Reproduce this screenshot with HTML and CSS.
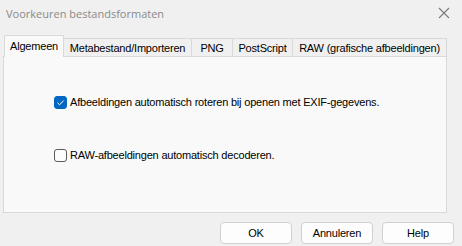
FILE: index.html
```html
<!DOCTYPE html>
<html>
<head>
<meta charset="utf-8">
<link rel="stylesheet" href="styles.css">
</head>
<body>
<div class="dialog">
  <div class="titlebar">
    <span class="title">Voorkeuren bestandsformaten</span>
    <svg class="close" width="12" height="12" viewBox="0 0 12 12"><path d="M1 1L11 11M11 1L1 11" stroke="#7a7a7a" stroke-width="1.1" fill="none"/></svg>
  </div>
  <div class="tabs">
    <div class="tab active t1">Algemeen</div>
    <div class="tab t2">Metabestand/Importeren</div>
    <div class="tab t3">PNG</div>
    <div class="tab t4">PostScript</div>
    <div class="tab t5">RAW (grafische afbeeldingen)</div>
  </div>
  <div class="panel">
    <label class="row first">
      <span class="box checked"><svg width="13" height="13" viewBox="0 0 13 13"><path d="M3.5 6.8L5.6 8.8L9.6 4.6" stroke="#fff" stroke-width="1" fill="none"/></svg></span>
      <span class="label">Afbeeldingen automatisch roteren bij openen met EXIF-gegevens.</span>
    </label>
    <label class="row second">
      <span class="box"></span>
      <span class="label">RAW-afbeeldingen automatisch decoderen.</span>
    </label>
  </div>
  <div class="buttons">
    <div class="btn">OK</div>
    <div class="btn">Annuleren</div>
    <div class="btn">Help</div>
  </div>
</div>
</body>
</html>
```
FILE: styles.css
```css
html, body {
  margin: 0;
  padding: 0;
  background: #f0f0f0;
}
.dialog {
  width: 462px;
  height: 246px;
  overflow: hidden;
  font-family: "Liberation Sans", Arial, sans-serif;
  font-size: 11px;
  letter-spacing: -0.2px;
  color: #000;
}
.titlebar {
  height: 26px;
  display: flex;
  align-items: center;
  justify-content: space-between;
  padding: 0 12px 0 6px;
}
.title {
  font-family: "Open Sans", "Noto Sans", sans-serif;
  font-size: 11px;
  letter-spacing: 0;
  color: #8a8a8a;
}
.close {
  display: block;
}
.tabs {
  display: flex;
  align-items: flex-end;
  margin: 9px 0 0 4px;
  height: 21px;
  position: relative;
  z-index: 1;
}
.tab {
  height: 18px;
  line-height: 18px;
  border: 1px solid #d9d9d9;
  border-bottom: none;
  border-left: none;
  background: #f0f0f0;
  box-sizing: border-box;
  text-align: center;
  white-space: nowrap;
}
.tab.active {
  height: 22px;
  line-height: 20px;
  margin-bottom: -1px;
  border-left: 1px solid #d9d9d9;
  background: #f9f9f9;
}
.t1 { width: 60px; }
.t2 { width: 128px; }
.t3 { width: 41px; }
.t4 { width: 60px; }
.t5 { width: 154px; }
.panel {
  margin-left: 3px;
  width: 444px;
  height: 157px;
  box-sizing: border-box;
  border: 1px solid #d9d9d9;
  background: #f9f9f9;
  padding-left: 50px;
}
.row {
  display: flex;
  align-items: center;
  gap: 3px;
}
.row.first {
  margin-top: 38px;
}
.row.second {
  margin-top: 39px;
}
.box {
  width: 13px;
  height: 13px;
  box-sizing: border-box;
  border: 1px solid #5c5c5c;
  border-radius: 3px;
  background: #fdfdfd;
  display: flex;
}
.box.checked {
  background: #0067c0;
  border-color: #0067c0;
}
.box svg {
  margin: -1px;
}
.label {
  line-height: 14px;
}
.buttons {
  display: flex;
  justify-content: flex-end;
  gap: 9px;
  padding-right: 8px;
  margin-top: 9px;
}
.btn {
  width: 72px;
  height: 22px;
  box-sizing: border-box;
  border: 1px solid #d0d0d0;
  border-radius: 4px;
  background: #fdfdfd;
  text-align: center;
  line-height: 20px;
}
```
